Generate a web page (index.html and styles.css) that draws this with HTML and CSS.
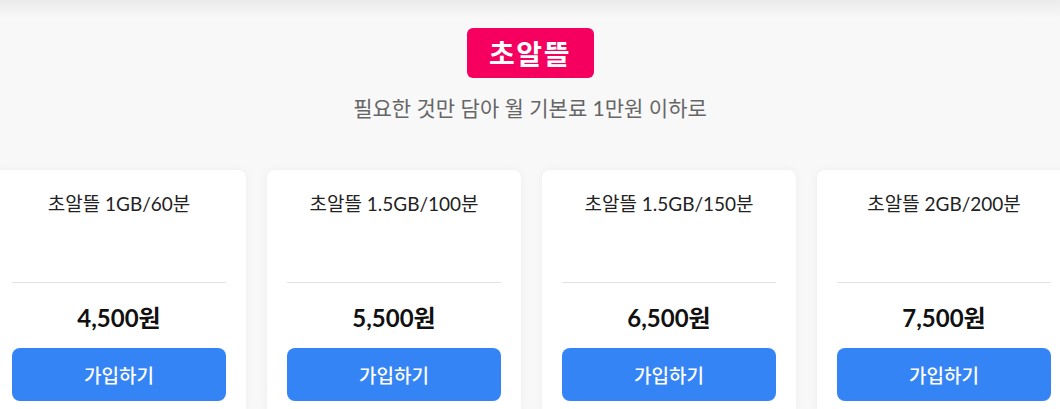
FILE: index.html
```html
<!DOCTYPE html>
<html lang="ko">
<head>
<meta charset="utf-8">
<title>초알뜰</title>
<link rel="stylesheet" href="styles.css">
</head>
<body>
<main class="page">
  <header class="intro">
    <span class="badge">초알뜰</span>
    <p class="subtitle">필요한 것만 담아 월 기본료 1만원 이하로</p>
  </header>
  <section class="plans">
    <article class="card">
      <h3 class="card-title">초알뜰 1GB/60분</h3>
      <hr class="divider">
      <p class="price">4,500원</p>
      <button class="join">가입하기</button>
    </article>
    <article class="card">
      <h3 class="card-title">초알뜰 1.5GB/100분</h3>
      <hr class="divider">
      <p class="price">5,500원</p>
      <button class="join">가입하기</button>
    </article>
    <article class="card">
      <h3 class="card-title">초알뜰 1.5GB/150분</h3>
      <hr class="divider">
      <p class="price">6,500원</p>
      <button class="join">가입하기</button>
    </article>
    <article class="card">
      <h3 class="card-title">초알뜰 2GB/200분</h3>
      <hr class="divider">
      <p class="price">7,500원</p>
      <button class="join">가입하기</button>
    </article>
  </section>
</main>
</body>
</html>
```

FILE: styles.css
```css
html, body {
  margin: 0;
  padding: 0;
}
body {
  background: #f8f8f8;
  font-family: Lato, "Noto Sans CJK KR", sans-serif;
  overflow: hidden;
  height: 409px;
}
.page {
  background: linear-gradient(#ebebeb 0px, #f8f8f8 18px, #f8f8f8 100%);
  height: 409px;
  overflow: hidden;
}
.intro {
  display: flex;
  flex-direction: column;
  align-items: center;
  padding-top: 28px;
  height: 142px;
}
.badge {
  display: flex;
  align-items: center;
  justify-content: center;
  width: 127px;
  height: 50px;
  box-sizing: border-box;
  background: #f5005f;
  color: #fff;
  border-radius: 6px;
  font-size: 28px;
  font-weight: 700;
  letter-spacing: 1.5px;
}
.subtitle {
  margin: 16px 0 0;
  font-size: 21px;
  line-height: 28px;
  color: #666;
}
.plans {
  display: flex;
  gap: 21px;
  margin-left: -8px;
}
.card {
  flex: 0 0 254px;
  box-sizing: border-box;
  background: #fff;
  border-radius: 8px 8px 0 0;
  padding: 22px 20px 0;
  box-shadow: 0 0 10px rgba(0, 0, 0, 0.05);
  display: flex;
  flex-direction: column;
  height: 239px;
}
.card-title {
  margin: 0;
  height: 90px;
  font-size: 19px;
  line-height: 24px;
  font-weight: 400;
  color: #222;
  text-align: center;
}
.divider {
  margin: 0;
  border: 0;
  border-top: 1px solid #e2e2e2;
}
.price {
  margin: 20px 0 0;
  font-size: 24px;
  line-height: 30px;
  font-weight: 700;
  color: #111;
  text-align: center;
}
.join {
  flex: 0 0 53px;
  margin-top: 15px;
  height: 53px;
  border: 0;
  border-radius: 8px;
  background: #3584f6;
  color: #fff;
  font-family: Lato, "Noto Sans CJK KR", sans-serif;
  font-size: 19px;
  font-weight: 500;
  cursor: pointer;
}
```
